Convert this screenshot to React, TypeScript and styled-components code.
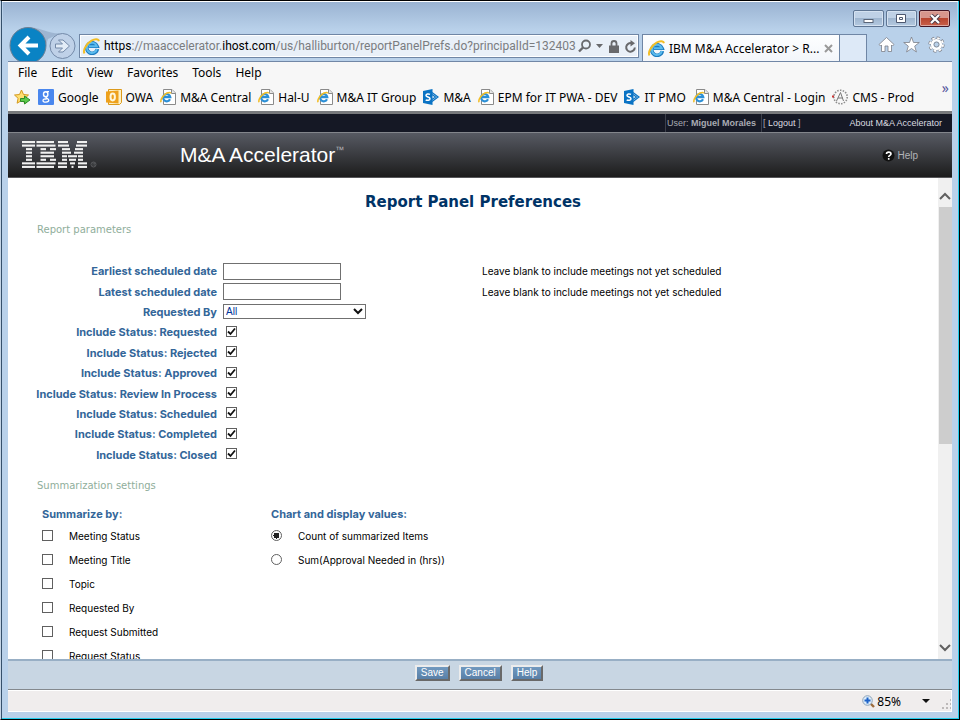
import React from "react";
import styled, { createGlobalStyle } from "styled-components";

const ui = `"Noto Sans", "Open Sans", sans-serif`;
const verdana = `"DejaVu Sans", Verdana, sans-serif`;
const body = `Inter, Verdana, sans-serif`;
const arial = `"Liberation Sans", Arial, sans-serif`;

const GlobalStyle = createGlobalStyle`
  * { box-sizing: border-box; }
  body { margin: 0; background: #000; }
  button, input, select { font: inherit; margin: 0; }
  a { color: inherit; text-decoration: none; }
`;

const Frame = styled.div`
  height: 100vh;
  display: flex;
  flex-direction: column;
  border: 1px solid #000;
  border-left: 1px solid #c5d5e6;
  box-shadow: inset 1px 0 #35506b, inset -1px -1px #22cdec, inset 0 1px #fff;
  padding: 1px 7px 7px;
  background: #b9d1ea;
  font-family: ${ui};
  font-size: 12px;
  color: #000;
`;

const Caption = styled.header`
  height: 59px;
  margin: 0 -5px;
  padding: 0 5px;
  display: flex;
  flex-direction: column;
  flex: none;
  background: linear-gradient(#9ab3d2, #b9d1ea 28px);
`;

const WindowButtons = styled.div`
  display: flex;
  justify-content: flex-end;
  gap: 2px;
  padding: 8px 2px 0 0;
  height: 25px;
`;

const WindowButton = styled.button<{ $close?: boolean }>`
  width: 31px;
  height: 17px;
  padding: 0;
  display: grid;
  place-items: center;
  border: 1px solid ${(p) => (p.$close ? "#431422" : "#5f7694")};
  border-radius: 2px;
  box-shadow: inset 0 0 0 1px ${(p) => (p.$close ? "#dda79f" : "#d5e2f1")};
  background: ${(p) =>
    p.$close
      ? "linear-gradient(#d7968c 45%, #b8452f 50%, #c8604a)"
      : "linear-gradient(#bfd1e6 45%, #9fb6d0 50%, #b4c9e0)"};
`;

const NavRow = styled.div`
  display: flex;
  align-items: flex-start;
  height: 34px;
  flex: none;
`;

const NavButtons = styled.div`
  display: flex;
  align-items: center;
  flex: none;
  width: 71px;
`;

const RoundButton = styled.button`
  padding: 0;
  border: 0;
  background: none;
  display: block;
  svg { display: block; overflow: visible; }
  & + & { position: relative; }
`;

const Address = styled.div`
  flex: 1 1 0;
  min-width: 0;
  height: 24px;
  margin-top: 7px;
  padding: 0 1px 0 3px;
  display: flex;
  align-items: center;
  gap: 4px;
  border: 1px solid #6f86a5;
  box-shadow: inset 0 0 0 1px #fff;
  background: #e9f0f8;
`;

const Url = styled.div`
  flex: 1;
  min-width: 0;
  white-space: nowrap;
  font-family: Roboto, sans-serif;
  color: #7a7c80;
  span { color: #000; }
`;

const IconButton = styled.button`
  padding: 0;
  border: 0;
  background: none;
  display: grid;
  place-items: center;
  flex: none;
`;

const Tab = styled.div`
  display: flex;
  align-items: center;
  gap: 4px;
  width: 198px;
  flex: none;
  height: 27px;
  margin: 7px 0 0 3px;
  padding: 0 6px 0 5px;
  border: 1px solid #6f86a5;
  border-bottom: 0;
  background: linear-gradient(#fdfeff, #f3f6fa);
  span { flex: 1; white-space: nowrap; }
`;

const NewTab = styled.button`
  width: 27px;
  height: 27px;
  margin-top: 7px;
  flex: none;
  padding: 0;
  border: 1px solid #6f86a5;
  border-width: 1px 1px 0 0;
  background: #dde9f7;
`;

const Tools = styled.div`
  display: flex;
  gap: 8px;
  margin: 9px 7px 0 11px;
  flex: none;
`;

const Bars = styled.div`
  flex: none;
  border-top: 1px solid #7187a6;
  background: #f7f7f7;
`;

const MenuBar = styled.nav`
  height: 21px;
  padding: 0 10px;
  display: flex;
  align-items: center;
  gap: 14px;
`;

const MenuItem = styled.button`
  padding: 0;
  border: 0;
  background: none;
`;

const Favorites = styled.nav`
  height: 28px;
  padding: 0 3px 0 6px;
  display: flex;
  align-items: center;
  gap: 7px;
`;

const Favorite = styled.a`
  display: flex;
  align-items: center;
  gap: 4px;
  white-space: nowrap;
  svg { flex: none; }
`;

const More = styled.button`
  align-self: flex-start;
  margin-left: auto;
  padding: 0;
  border: 0;
  background: none;
  color: #55559c;
  font-size: 14px;
  line-height: 10px;
`;

const UserBar = styled.div`
  flex: none;
  height: 22px;
  display: flex;
  align-items: stretch;
  justify-content: flex-end;
  border-top: 3px solid #77797c;
  border-bottom: 1px solid #83868c;
  background: #151825;
  color: #a9abb3;
  font: 9px/18px ${arial};
`;

const UserCell = styled.div<{ $wide?: boolean }>`
  border-left: 1px solid #3c3f4b;
  padding-left: 1px;
  display: flex;
  justify-content: space-between;
  width: ${(p) => (p.$wide ? "191px" : "96px")};
  padding-right: ${(p) => (p.$wide ? "10px" : "0")};
  white-space: pre;
  a { color: #dcdde0; }
`;

const Banner = styled.div`
  flex: none;
  height: 45px;
  display: flex;
  align-items: center;
  padding: 0 34px 0 14px;
  border-bottom: 1px solid #57575a;
  background: linear-gradient(#575a63, #1c1c1c);
  color: #fff;
  font-family: ${arial};
`;

const ProductName = styled.div`
  flex: 1;
  margin-left: 82px;
  font-size: 21px;
  line-height: 24px;
  sup { font-size: 9px; line-height: 8px; vertical-align: 9px; color: #b5b5b8; }
`;

const HelpLink = styled.a`
  display: flex;
  align-items: center;
  gap: 2px;
  font-size: 10px;
  color: #b2b4b8;
`;

const Viewport = styled.div`
  flex: 1;
  min-height: 0;
  display: flex;
  background: #fff;
`;

const Page = styled.main`
  flex: 1;
  min-width: 0;
  overflow: hidden;
  font-family: ${body};
  font-size: 10px;
  line-height: 14px;
  padding: 14px 0 0 28px;
`;

const Title = styled.h1`
  margin: 0 28px 11px 0;
  text-align: center;
  font-family: ${verdana};
  font-size: 15px;
  line-height: 20px;
  color: #003366;
`;

const SectionTitle = styled.h2`
  margin: 0 1px;
  font-family: ${verdana};
  font-weight: normal;
  font-size: 10px;
  line-height: 14px;
  color: #8fae9b;
`;

const Parameters = styled.div`
  display: grid;
  grid-template-columns: 181px 253px 1fr;
  grid-auto-rows: 1fr;
  align-items: center;
  column-gap: 6px;
  min-height: 204px;
  margin: 24px 0 14px;
`;

const ParamLabel = styled.label`
  grid-column: 1;
  justify-self: end;
  font-size: 11px;
  font-weight: bold;
  color: #336699;
  white-space: nowrap;
`;

const DateInput = styled.input`
  width: 118px;
  height: 17px;
  padding: 0 2px;
  border: 1px solid #707070;
`;

const Select = styled.select`
  width: 143px;
  height: 15px;
  padding: 0 2px;
  border: 1px solid #707070;
  border-radius: 0;
  appearance: none;
  color: #003399;
  font-family: ${arial};
  font-size: 10px;
  line-height: 13px;
  background: #fff
    url("data:image/svg+xml,%3Csvg xmlns='http://www.w3.org/2000/svg' width='10' height='7'%3E%3Cpath d='M1 1l4 4 4-4' fill='none' stroke='%23111' stroke-width='2'/%3E%3C/svg%3E")
    right 2px center no-repeat;
`;

const Tick = styled.input`
  appearance: none;
  width: 11px;
  height: 11px;
  border: 1px solid #606060;
  background: #fff;
  border-radius: ${(p) => (p.type === "radio" ? "50%" : "0")};
  &[type="checkbox"]:checked {
    background: url("data:image/svg+xml,%3Csvg xmlns='http://www.w3.org/2000/svg' width='9' height='9'%3E%3Cpath d='M1 4.500l2.500 2.500L8 1.500' fill='none' stroke='%23111' stroke-width='1.800'/%3E%3C/svg%3E") center no-repeat;
  }
  &[type="radio"]:checked {
    background: radial-gradient(circle, #222 0 3px, #fff 3px);
  }
`;

const StatusTick = styled(Tick)`
  margin: 0 3px 2px;
`;

const Settings = styled.div`
  display: grid;
  grid-template-columns: 229px 1fr;
  padding: 14px 0 0 6px;
`;

const Group = styled.fieldset`
  margin: 0;
  padding: 0;
  border: 0;
  min-width: 0;
`;

const Legend = styled.legend`
  padding: 0 0 3px;
  font-size: 11px;
  font-weight: bold;
  color: #336699;
`;

const Option = styled.label`
  display: flex;
  align-items: center;
  gap: 16px;
  height: 24px;
  ${Tick} { margin-bottom: 2px; }
`;

const Scrollbar = styled.div`
  width: 14px;
  flex: none;
  display: flex;
  flex-direction: column;
  background: #f0f0f0;
`;

const ScrollButton = styled.button`
  height: 29px;
  padding: 6px 0 0;
  border: 0;
  background: none;
  display: grid;
  place-items: center;
`;

const Track = styled.div`
  flex: 1;
  padding-left: 1px;
`;

const Thumb = styled.div`
  height: 56%;
  background: #cdcdcd;
`;

const Actions = styled.div`
  flex: none;
  height: 31px;
  display: flex;
  justify-content: center;
  align-items: flex-start;
  gap: 9px;
  padding: 4px 2px 0 0;
  border-top: 2px solid #98afc5;
  border-bottom: 1px solid #84898e;
  background: #c8d6e3;
`;

const ActionButton = styled.button`
  height: 16px;
  padding: 0 4px;
  border: 2px solid;
  border-color: #ececec #696969 #696969 #ececec;
  background: linear-gradient(#7199bf, #587fa7);
  color: #fff;
  font: 10px/12px ${arial};
`;

const StatusBar = styled.footer`
  flex: none;
  height: 22px;
  display: flex;
  align-items: center;
  justify-content: flex-end;
  border: 1px solid #fff;
  border-width: 1px 1px 1px 0;
  background: #f0eded;
`;

const Zoom = styled.button`
  display: flex;
  align-items: center;
  gap: 2px;
  padding: 0;
  border: 0;
  background: none;
  margin-right: 11px;
  svg:last-child { margin-left: 19px; }
`;

const IeMark = ({ size }: { size: number }) => (
  <svg width={size} height={size} viewBox="0 0 16 16">
    <path d="M13.500 10.300A5 5 0 1 1 13.300 7.800H5.500" fill="none" stroke="#1d7cc0" strokeWidth="3.400" />
    <path d="M13.100 10.300A4.800 4.800 0 1 1 13 7.800H5.500" fill="none" stroke="#5bbcee" strokeWidth="1.800" />
    <path d="M1.500 14.500C-.5 12 3 5.500 8 2.500c3-1.800 6.500-2 7 .5" fill="none" stroke="#f2bd24" strokeWidth="1.800" />
  </svg>
);

const PageIcon = () => (
  <svg width="16" height="16" viewBox="0 0 16 16">
    <path d="M3.500.5h8.500l3.500 3.500v11.500h-12z" fill="#fff" stroke="#8a8a8a" />
    <path d="M11.500.5v4h4" fill="#e8e8e8" stroke="#8a8a8a" />
    <path d="M10 10.200A3.600 3.600 0 1 1 10.300 8.200H4" fill="none" stroke="#2b8fd6" strokeWidth="2.200" />
    <path d="M1 13.200C0 10 4 5.500 7 4c2-.9 3.500-.8 3.800.4" fill="none" stroke="#f2bd24" strokeWidth="1.500" />
  </svg>
);

const GoogleIcon = () => (
  <svg width="16" height="16" viewBox="0 0 16 16">
    <rect width="16" height="16" rx="1" fill="#4a87ee" />
    <ellipse cx="7.700" cy="5.200" rx="2.200" ry="2.500" fill="none" stroke="#fff" strokeWidth="1.400" />
    <path d="M8.500 2.700H11M8.500 7.600c-2 1 2.300 1.800 2.300 3.700S5 14 5 11.800 7.500 10 8.700 10" fill="none" stroke="#fff" strokeWidth="1.300" />
  </svg>
);

const OutlookIcon = () => (
  <svg width="16" height="16" viewBox="0 0 16 16">
    <path d="M2.500.5h13v13l-2 2h-11z" fill="#fdf0c4" stroke="#dc9a1c" />
    <path d="M0 2.500 12.500 1.500v13L0 13.500z" fill="#eea11c" />
    <ellipse cx="6.700" cy="8" rx="2.200" ry="3.400" fill="none" stroke="#fff6da" strokeWidth="2" />
  </svg>
);

const SharePointIcon = () => (
  <svg width="16" height="16" viewBox="0 0 16 16">
    <path d="M9 3.500 15 8l-6 4.500M9 5.500 12.500 8 9 10.500" fill="none" stroke="#0a73c4" strokeWidth="1.200" />
    <path d="M0 2 9.500 0v16L0 14z" fill="#0a73c4" />
    <path d="M7 5.400C5.500 4.600 3 4.800 3 6.400S7 8 7 9.700s-2.800 2-4.300 1.100" fill="none" stroke="#fff" strokeWidth="1.500" />
  </svg>
);

const CmsIcon = () => (
  <svg width="16" height="16" viewBox="0 0 16 16">
    <circle cx="8.500" cy="8" r="6.700" fill="none" stroke="#8e8e8e" strokeWidth="1.600" strokeDasharray="1.500 1.300" />
    <path d="M4.500 12 8.500 3.500l3 8.500M6 9h5" fill="none" stroke="#777" />
    <path d="M0 7.500h2" stroke="#c33" strokeWidth="2" />
  </svg>
);

const AddFavoriteIcon = () => (
  <svg width="17" height="16" viewBox="0 0 17 16">
    <path d="m7.500 1 2 4.500 5 .5-3.700 3.300 1.100 4.900-4.400-2.600-4.400 2.600 1-4.900L.5 6l5-.5z" fill="#ffdf70" stroke="#d49a20" />
    <path d="M6.500 9.500h4V7l5.500 4-5.500 4v-2.500h-4z" fill="#5cc94a" stroke="#2b8d2a" />
  </svg>
);

const span = (y: number, parts: number[][]) =>
  parts.map(([a, b]) => <rect key={`${y}-${a}`} x={a} y={y * 3.55} width={b - a} height="2.100" />);

const IbmLogo = () => (
  <svg width="76" height="28" viewBox="0 0 76 28" fill="#f1f1f1" role="img" aria-label="IBM">
    {span(0, [[0, 13], [14.5, 32], [36, 46], [55, 65]])}
    {span(1, [[0, 13], [14.5, 33.5], [36, 47], [54, 65]])}
    {span(2, [[4, 10], [18.5, 24], [28, 34], [40, 48], [53, 61]])}
    {span(3, [[4, 10], [18.5, 32], [40, 49], [52, 61]])}
    {span(4, [[4, 10], [18.5, 32], [40, 45], [46, 55], [56, 61]])}
    {span(5, [[4, 10], [18.5, 24], [28, 34], [40, 45], [47, 54], [56, 61]])}
    {span(6, [[0, 13], [14.5, 33.5], [36, 45], [48, 53], [56, 65]])}
    {span(7, [[0, 13], [14.5, 32], [36, 45], [49.5, 51.5], [56, 65]])}
    <circle cx="71.500" cy="23.500" r="2.500" fill="none" stroke="#5a5b5e" />
    <path d="M71 25v-3h1.500v1.500l.5 1.500" fill="none" stroke="#5a5b5e" strokeWidth=".7" />
  </svg>
);

const favorites = [
  { name: "Google", Icon: GoogleIcon },
  { name: "OWA", Icon: OutlookIcon },
  { name: "M&A Central", Icon: PageIcon },
  { name: "Hal-U", Icon: PageIcon },
  { name: "M&A IT Group", Icon: PageIcon },
  { name: "M&A", Icon: SharePointIcon },
  { name: "EPM for IT PWA - DEV", Icon: PageIcon },
  { name: "IT PMO", Icon: SharePointIcon },
  { name: "M&A Central - Login", Icon: PageIcon },
  { name: "CMS - Prod", Icon: CmsIcon },
];

const statuses = ["Requested", "Rejected", "Approved", "Review In Process", "Scheduled", "Completed", "Closed"];
const summaries = ["Meeting Status", "Meeting Title", "Topic", "Requested By", "Request Submitted", "Request Status"];
const values = ["Count of summarized Items", "Sum(Approval Needed in (hrs))"];

export default function App() {
  return (
    <Frame>
      <GlobalStyle />
      <Caption>
        <WindowButtons>
          <WindowButton aria-label="Minimize">
            <svg width="12" height="11"><rect x="1" y="6.500" width="9" height="3" fill="#fff" stroke="#5a6577" /></svg>
          </WindowButton>
          <WindowButton aria-label="Maximize">
            <svg width="11" height="9"><path d="M.5.5h9v8h-9zM3.500 3.500h3v2h-3z" fill="#fff" stroke="#4d5870" /></svg>
          </WindowButton>
          <WindowButton $close aria-label="Close">
            <svg width="12" height="10">
              <path d="m2 1 8 8m0-8L2 9" stroke="#4c3b48" strokeWidth="4" />
              <path d="m2 1 8 8m0-8L2 9" stroke="#fff" strokeWidth="2.200" />
            </svg>
          </WindowButton>
        </WindowButtons>
        <NavRow>
          <NavButtons>
            <RoundButton aria-label="Back">
              <svg width="40" height="34" viewBox="0 0 40 34">
                <path d="M22 .5c12 0 16 6 30 6L40 12l-4 12z" fill="#93a9c6" opacity=".7" />
                <circle cx="20" cy="18.500" r="18" fill="#0a83c4" stroke="#6d7f93" />
                <path d="M30 18.500H12m9-8.500-8.500 8.500L21 27" fill="none" stroke="#fff" strokeWidth="4" />
              </svg>
            </RoundButton>
            <RoundButton aria-label="Forward">
              <svg width="28" height="34" viewBox="0 0 28 34">
                <circle cx="14.500" cy="19" r="12.500" fill="#bfd1e8" stroke="#7389a8" />
                <path d="M7.500 17h7l-4-4h4.500l6.500 6-6.500 6h-4.500l4-4h-7z" fill="#e2ecf7" stroke="#7389a8" />
              </svg>
            </RoundButton>
          </NavButtons>
          <Address>
            <IeMark size={17} />
            <Url role="textbox" aria-label="Address" tabIndex={0}>
              <span>https</span>://maaccelerator.<span>ihost.com</span>/us/halliburton/reportPanelPrefs.do?principalId=132403
            </Url>
            <IconButton aria-label="Search">
              <svg width="13" height="14"><circle cx="8" cy="5.500" r="4" fill="none" stroke="#68696c" strokeWidth="1.800" /><path d="M5 8.500 1 12.500" stroke="#68696c" strokeWidth="2.400" /></svg>
            </IconButton>
            <IconButton aria-label="Address list">
              <svg width="9" height="12"><path d="M1 4h7L4.500 8z" fill="#68696c" /></svg>
            </IconButton>
            <IconButton aria-label="Security report">
              <svg width="12" height="13"><path d="M3.500 6V3.500a2.500 2.500 0 0 1 5 0V6" fill="none" stroke="#68696c" strokeWidth="1.800" /><path d="M1 5.500h10V13H1z" fill="#68696c" /></svg>
            </IconButton>
            <IconButton aria-label="Refresh">
              <svg width="13" height="13"><path d="M10.800 7.500A4.300 4.300 0 1 1 7.500 3.200" fill="none" stroke="#68696c" strokeWidth="2" /><path d="M6.500 0 11 3.300 6.500 6.500z" fill="#68696c" /></svg>
            </IconButton>
          </Address>
          <Tab>
            <IeMark size={17} />
            <span>IBM M&amp;A Accelerator &gt; R...</span>
            <IconButton aria-label="Close tab">
              <svg width="9" height="9"><path d="m1 1 7 7m0-7L1 8" stroke="#999" strokeWidth="2" /></svg>
            </IconButton>
          </Tab>
          <NewTab aria-label="New tab" />
          <Tools>
            <IconButton aria-label="Home">
              <svg width="17" height="17"><path d="m8.500 1.500 7.500 7-1.500 1.500-1-1v6.500H10V10H7v5.500H3.500V9l-1 1L1 8.500z" fill="#fff" stroke="#7c7f88" strokeWidth=".8" /></svg>
            </IconButton>
            <IconButton aria-label="Favorites">
              <svg width="17" height="17"><path d="m8.500 1 2 5.500h5.800l-4.600 3.600L13.400 16l-4.900-3.500L3.600 16l1.700-5.900L.7 6.500h5.800z" fill="#fff" stroke="#7c7f88" strokeWidth=".8" /></svg>
            </IconButton>
            <IconButton aria-label="Tools">
              <svg width="17" height="17" viewBox="0 0 17 17">
                <circle cx="8.500" cy="8.500" r="6.600" fill="none" stroke="#7c7f88" strokeWidth="3" strokeDasharray="3 2.180" />
                <circle cx="8.500" cy="8.500" r="5.500" fill="none" stroke="#7c7f88" strokeWidth="1" />
                <circle cx="8.500" cy="8.500" r="6.500" fill="none" stroke="#fff" strokeWidth="1.800" strokeDasharray="2.500 2.600" />
                <circle cx="8.500" cy="8.500" r="4.300" fill="none" stroke="#fff" strokeWidth="2.600" />
                <circle cx="8.500" cy="8.500" r="2.500" fill="#b9d1ea" stroke="#7c7f88" strokeWidth=".8" />
              </svg>
            </IconButton>
          </Tools>
        </NavRow>
      </Caption>

      <Bars>
        <MenuBar aria-label="Menu">
          {["File", "Edit", "View", "Favorites", "Tools", "Help"].map((m) => (
            <MenuItem key={m}>{m}</MenuItem>
          ))}
        </MenuBar>
        <Favorites aria-label="Favorites bar">
          <IconButton aria-label="Add to Favorites bar"><AddFavoriteIcon /></IconButton>
          {favorites.map(({ name, Icon }) => (
            <Favorite key={name} href="#"><Icon />{name}</Favorite>
          ))}
          <More aria-label="More favorites">»</More>
        </Favorites>
      </Bars>

      <UserBar>
        <UserCell><span>User: <b>Miguel Morales</b></span></UserCell>
        <UserCell $wide>
          <span>[ <a href="#">Logout</a> ]</span>
          <a href="#">About M&amp;A Accelerator</a>
        </UserCell>
      </UserBar>
      <Banner>
        <IbmLogo />
        <ProductName>M&amp;A Accelerator<sup>™</sup></ProductName>
        <HelpLink href="#">
          <svg width="13" height="13">
            <circle cx="6.500" cy="6.500" r="6" fill="#111" />
            <path d="M4.500 5c0-2.500 4.500-2.500 4.500 0 0 1.500-2.300 1.300-2.300 3M6.700 9v1.800" fill="none" stroke="#fff" strokeWidth="1.600" />
          </svg>
          Help
        </HelpLink>
      </Banner>

      <Viewport>
        <Page>
          <Title>Report Panel Preferences</Title>
          <SectionTitle>Report parameters</SectionTitle>
          <Parameters>
            <ParamLabel htmlFor="earliest">Earliest scheduled date</ParamLabel>
            <DateInput id="earliest" type="text" />
            <span>Leave blank to include meetings not yet scheduled</span>
            <ParamLabel htmlFor="latest">Latest scheduled date</ParamLabel>
            <DateInput id="latest" type="text" />
            <span>Leave blank to include meetings not yet scheduled</span>
            <ParamLabel htmlFor="requestedBy">Requested By</ParamLabel>
            <Select id="requestedBy"><option>All</option></Select>
            {statuses.map((s) => (
              <React.Fragment key={s}>
                <ParamLabel htmlFor={s}>Include Status: {s}</ParamLabel>
                <StatusTick id={s} type="checkbox" defaultChecked />
              </React.Fragment>
            ))}
          </Parameters>
          <SectionTitle>Summarization settings</SectionTitle>
          <Settings>
            <Group>
              <Legend>Summarize by:</Legend>
              {summaries.map((s) => (
                <Option key={s}><Tick type="checkbox" />{s}</Option>
              ))}
            </Group>
            <Group>
              <Legend>Chart and display values:</Legend>
              {values.map((v, i) => (
                <Option key={v}><Tick type="radio" name="value" defaultChecked={i === 0} />{v}</Option>
              ))}
            </Group>
          </Settings>
        </Page>
        <Scrollbar>
          <ScrollButton aria-label="Scroll up">
            <svg width="12" height="8"><path d="m1 7 5-5 5 5" fill="none" stroke="#606060" strokeWidth="2" /></svg>
          </ScrollButton>
          <Track><Thumb /></Track>
          <ScrollButton aria-label="Scroll down">
            <svg width="12" height="8"><path d="m1 1 5 5 5-5" fill="none" stroke="#606060" strokeWidth="2" /></svg>
          </ScrollButton>
        </Scrollbar>
      </Viewport>

      <Actions>
        <ActionButton>Save</ActionButton>
        <ActionButton>Cancel</ActionButton>
        <ActionButton>Help</ActionButton>
      </Actions>
      <StatusBar>
        <Zoom aria-label="Zoom level 85%">
          <svg width="13" height="13">
            <path d="m8 8 4 4" stroke="#9c6b3c" strokeWidth="2.400" />
            <circle cx="5.500" cy="5.500" r="4.800" fill="#dcecfa" stroke="#8fa3b8" />
            <path d="M5.500 2.500v6m-3-3h6" stroke="#1d62c8" strokeWidth="2" />
          </svg>
          85%
          <svg width="8" height="5"><path d="M0 0h8L4 4z" fill="#111" /></svg>
        </Zoom>
        <svg width="10" height="18">
          <path d="M1 16h2m2 0h2m2 0h2M5 12h2m2 0h2M9 8h2" stroke="#bdb9b9" strokeWidth="2" />
        </svg>
      </StatusBar>
    </Frame>
  );
}
